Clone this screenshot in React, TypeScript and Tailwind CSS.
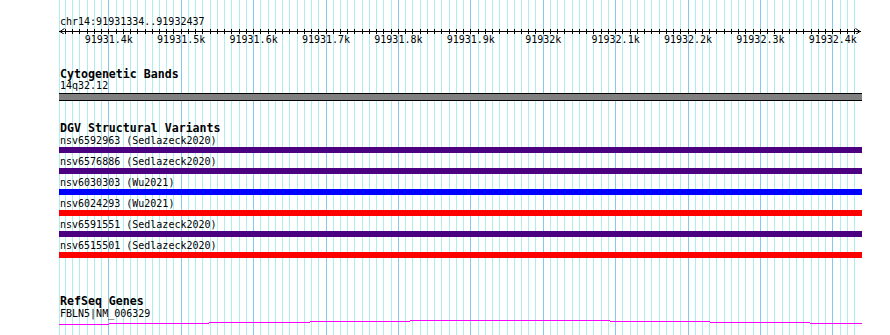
import React from 'react';

// view: chr14:91931334..91932437, drawn from x=59 to x=862
const LEFT = 59;
const WIDTH = 803;
const MAJOR_X = 108.3; // 91931.4k
const MINOR = 7.24; // 10 bp

const gridLines: { x: number; major: boolean }[] = [{ x: LEFT, major: false }];
for (let i = -6; ; i++) {
  const x = MAJOR_X + MINOR * i;
  if (x > 856) break;
  gridLines.push({ x: Math.round(x), major: i % 10 === 0 });
}

const rulerLabels = [
  '91931.4k', '91931.5k', '91931.6k', '91931.7k', '91931.8k', '91931.9k',
  '91932k', '91932.1k', '91932.2k', '91932.3k', '91932.4k',
];

type Variant = { id: string; study: string; color: string };

const variants: Variant[] = [
  { id: 'nsv6592963', study: 'Sedlazeck2020', color: 'bg-[#4b0082]' },
  { id: 'nsv6576886', study: 'Sedlazeck2020', color: 'bg-[#4b0082]' },
  { id: 'nsv6030303', study: 'Wu2021', color: 'bg-[#0000ff]' },
  { id: 'nsv6024293', study: 'Wu2021', color: 'bg-[#ff0000]' },
  { id: 'nsv6591551', study: 'Sedlazeck2020', color: 'bg-[#4b0082]' },
  { id: 'nsv6515501', study: 'Sedlazeck2020', color: 'bg-[#ff0000]' },
];

// intron line of FBLN5, drawn as stepped hat
const geneSegments: [number, number, number][] = [
  [59, 109, 5], [109, 209, 4], [209, 310, 3], [310, 410, 2],
  [410, 610, 1], [610, 710, 2], [710, 810, 3], [810, 862, 4],
];

function Grid() {
  return (
    <svg className="absolute left-0 top-0" width={890} height={335}>
      {gridLines.map((g, i) => (
        <line
          key={i}
          x1={g.x + 0.5}
          x2={g.x + 0.5}
          y1={0}
          y2={335}
          stroke={g.major ? '#86c9ee' : '#aeeeee'}
          strokeWidth={1}
        />
      ))}
    </svg>
  );
}

function Ruler() {
  return (
    <div>
      <div className="mt-[16px] pl-px text-[10px] leading-[11px]">chr14:91931334..91932437</div>
      <svg width={WIDTH} height={7} className="block">
        <line x1={0} x2={WIDTH - 1} y1={4.5} y2={4.5} stroke="#000" strokeWidth={1} />
        {gridLines.slice(1).map((g, i) => (
          <line key={i} x1={g.x - LEFT + 0.5} x2={g.x - LEFT + 0.5} y1={2} y2={7} stroke="#000" strokeWidth={1} />
        ))}
        <polyline points="5.5,1.5 1,4.5 5.5,7.5" fill="none" stroke="#000" strokeWidth={1} />
        <polyline points={`${WIDTH - 6.5},1.5 ${WIDTH - 2},4.5 ${WIDTH - 6.5},7.5`} fill="none" stroke="#000" strokeWidth={1} />
      </svg>
      <div className="relative h-[11px]">
        {rulerLabels.map((label, k) => (
          <span
            key={label}
            className="absolute top-0 -translate-x-1/2 text-[10px] leading-[11px] whitespace-nowrap"
            style={{ left: MAJOR_X + 72.4 * k - LEFT + 0.5 }}
          >
            {label}
          </span>
        ))}
      </div>
    </div>
  );
}

function TrackTitle({ children, className = '' }: { children: React.ReactNode; className?: string }) {
  return <div className={`pl-px text-[11.6px] leading-[12px] font-bold ${className}`}>{children}</div>;
}

export default function App() {
  return (
    <div
      className="relative w-[890px] h-[335px] overflow-hidden bg-white text-black"
      style={{ fontFamily: '"DejaVu Sans Mono", "Liberation Mono", monospace' }}
    >
      <Grid />

      <div className="relative ml-[59px] w-[803px]">
        <Ruler />

        {/* Cytogenetic Bands */}
        <TrackTitle className="mt-[23px]">Cytogenetic Bands</TrackTitle>
        <div className="pl-px text-[10px] leading-[11px]">14q32.12</div>
        <div className="mt-[2px] h-[8px] border-y border-black bg-[#808080]" />

        {/* DGV Structural Variants */}
        <TrackTitle className="mt-[21px]">DGV Structural Variants</TrackTitle>
        <div className="mt-px flex flex-col gap-[3px]">
          {variants.map((v) => (
            <div key={v.id} className="flex flex-col gap-px">
              <div className="pl-px text-[10px] leading-[11px] whitespace-nowrap">
                {v.id} ({v.study})
              </div>
              <div className={`h-[6px] ${v.color}`} />
            </div>
          ))}
        </div>

        {/* RefSeq Genes */}
        <div className="mt-[37px] pl-px text-[11.6px] leading-[13px] font-bold">RefSeq Genes</div>
        <div className="pl-px text-[10px] leading-[11px]">FBLN5|NM_006329</div>
        <svg width={WIDTH} height={8} className="block">
          {geneSegments.map(([x1, x2, y]) => (
            <rect key={x1} x={x1 - LEFT} y={y} width={x2 - x1} height={1} fill="#ff00ff" />
          ))}
        </svg>
      </div>
    </div>
  );
}
